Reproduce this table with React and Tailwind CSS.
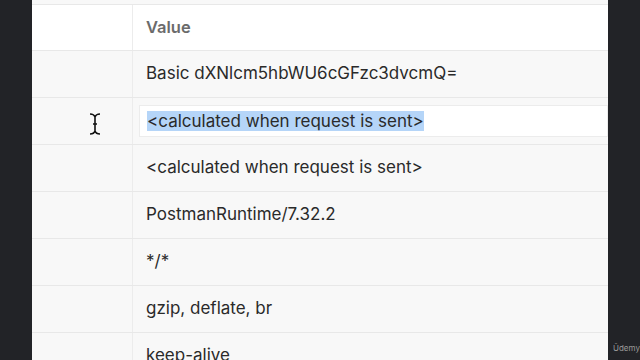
const rows = [
  "Basic dXNlcm5hbWU6cGFzc3dvcmQ=",
  "<calculated when request is sent>",
  "<calculated when request is sent>",
  "PostmanRuntime/7.32.2",
  "*/*",
  "gzip, deflate, br",
  "keep-alive",
];

function Cursor() {
  return (
    <svg className="absolute left-[56px] top-[14px]" width="14" height="24" viewBox="0 0 14 24">
      <path
        d="M2 2 Q6 2 7 5 Q8 2 12 2 M7 5 V19 M2 22 Q6 22 7 19 Q8 22 12 22 M5 12 H9"
        fill="none"
        stroke="#111"
        strokeWidth="1.6"
      />
    </svg>
  );
}

export default function App() {
  return (
    <div className="flex h-screen w-full overflow-hidden bg-[#222327] font-['Inter','Liberation_Sans',sans-serif]">
      <div className="w-[32px] shrink-0 bg-[#222327]" />
      <div className="flex min-w-0 flex-1 flex-col overflow-hidden bg-[#f8f8f8]">
        <div className="h-[5px] shrink-0 border-b border-[#e8e8e8] bg-[#f8f8f8]" />
        <div className="grid h-[46px] shrink-0 grid-cols-[101px_1fr] border-b border-[#e8e8e8] bg-white">
          <div className="border-r border-[#ececec]" />
          <div className="flex items-center pl-[13px] text-[16.5px] font-semibold text-[#6b6b6b]">Value</div>
        </div>
        {rows.map((text, i) => (
          <div
            key={i}
            className="relative grid h-[47px] shrink-0 grid-cols-[101px_1fr] border-b border-[#e8e8e8]"
          >
            <div className="border-r border-[#ececec]" />
            {i === 1 ? (
              <div className="flex items-center py-[7px] pl-[6px]">
                <div className="flex h-full w-full items-center border border-[#ececec] bg-white pl-[7px]">
                  <span className="bg-[#b5d5f8] text-[17px] leading-[20px] text-[#2a2a2a]">{text}</span>
                </div>
              </div>
            ) : (
              <div className="flex items-center pl-[13px] text-[17px] text-[#2a2a2a]">{text}</div>
            )}
            {i === 1 && <Cursor />}
          </div>
        ))}
      </div>
      <div className="flex w-[32px] shrink-0 flex-col justify-end bg-[#222327] pb-[8px] pl-[5px]">
        <span className="text-[8px] leading-none text-[#9a9a9a]">Ūdemy</span>
      </div>
    </div>
  );
}
